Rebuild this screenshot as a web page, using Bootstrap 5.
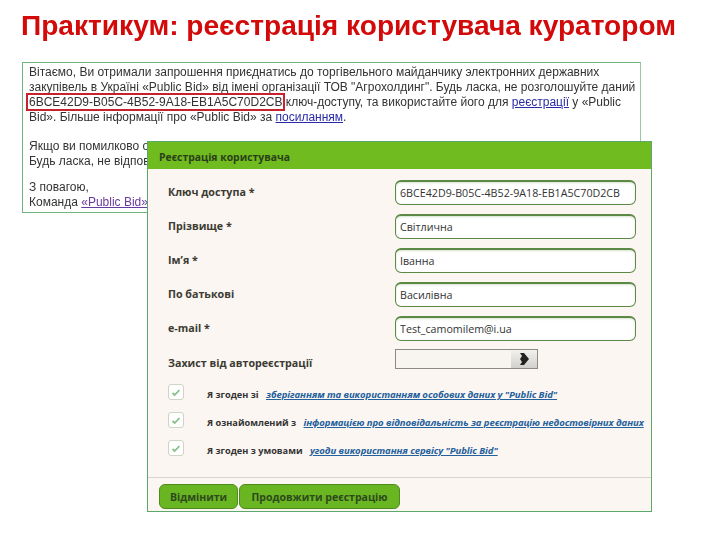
<!DOCTYPE html>
<html lang="uk">
<head>
<meta charset="utf-8">
<title>Практикум</title>
<link href="https://cdn.jsdelivr.net/npm/bootstrap@5.3.0/dist/css/bootstrap.min.css" rel="stylesheet">
<style>
html,body{margin:0;height:540px;overflow:hidden;background:#fff}
.stage{position:relative;width:720px;height:540px;padding:11px 0 0 21px;font-family:"Liberation Sans",Arial,sans-serif;filter:blur(.3px)}
.slide-title{font:700 28.1px/30px "Liberation Sans",Arial,sans-serif;color:#d20a0a;margin:0 0 21px;white-space:nowrap}
.mail{width:619px;height:151px;margin-left:1px;border:1px solid #6fb57c;border-right-color:#9cc9a5;padding:2px 0 0 6px;font-size:12px;line-height:15px;color:#333;white-space:nowrap}
.mail p{margin:0 0 14px}
.mail p+p{margin-bottom:11px}
.mail a{color:#2a2aa8}
.mail a.vis{color:#6a3a9e}
.keybox{border:2px solid #c8232c;padding:0 1px;margin-left:-3px;margin-right:-3px}
.reg{position:absolute;left:147px;top:141px;width:505px;height:371px;background:#fbf6f2;border:1px solid #5aa86a;font-family:"Open Sans","Noto Sans",sans-serif;display:flex;flex-direction:column}
.reg-head{height:27px;background:#70bb1f;font-size:10.4px;font-weight:700;color:#29401a;padding:5px 11px 0;display:flex;align-items:center;flex:none}
.reg-body{flex:1;padding:11px 15px 0 20px}
.frow{display:flex;align-items:center;height:25px;margin-bottom:9px}
.frow label{width:227px;font-size:10.7px;font-weight:700;color:#3b3b33;margin:0;flex:none}
.tinput{width:241px;height:25px;border:1px solid #5c8a45;border-top-width:2px;border-radius:6px;background:#fff;padding:0 4px;font-size:10.7px;color:#333;box-shadow:inset 0 1px 2px rgba(92,138,69,.25);font-family:inherit}
.captcha-row{height:20px;margin-bottom:15px;margin-top:-1px}
.captcha-row label{padding-top:8px}
.captcha{width:143px;height:20px;border:1px solid #8b8b84;background:#f8f4f0;display:flex;justify-content:flex-end}
.captcha span{width:26px;background:linear-gradient(#f3f1ee,#d2d0cd);display:flex;align-items:center;justify-content:center}
.crow{display:flex;align-items:flex-start;height:16px;margin-bottom:12px;font-size:9.2px;font-weight:700;color:#333;white-space:nowrap}
.crow .cap{padding-top:4px;line-height:13px}
.tick{width:16px;height:16px;border:1px solid #cfd5c6;border-radius:3px;background:#fff;flex:none;margin-right:23px;display:flex;align-items:center;justify-content:center}
.crow a{color:#24609c;font-style:italic;margin-left:5px;font-size:9.6px;letter-spacing:-.1px}
.reg-foot{height:34px;border-top:1px solid #d8d4cf;padding:6px 0 0 11px;display:flex;gap:1px;flex:none}
.gbtn{height:25px;background:#69b522;border:1px solid #4d8c1b;border-radius:6px;color:#2d4a1c;font:700 10.5px "Open Sans","Noto Sans",sans-serif;padding:0;display:flex;align-items:center;justify-content:center}
.b1{width:79px}.b2{width:161px}
</style>
</head>
<body>
<div class="stage">
  <h1 class="slide-title">Практикум: реєстрація користувача куратором</h1>
  <div class="mail">
    <p>Вітаємо, Ви отримали запрошення приєднатись до торгівельного майданчику электронних державних<br>закупівель в Україні «Public Bid» від імені організації ТОВ "Агрохолдинг". Будь ласка, не розголошуйте даний<br><span class="keybox">6BCE42D9-B05C-4B52-9A18-EB1A5C70D2CB</span> ключ-доступу, та використайте його для <a href="#">реєстрації</a> у «Public<br>Bid». Більше інформації про «Public Bid» за <a href="#">посиланням</a>.</p>
    <p>Якщо ви помилково о<br>Будь ласка, не відпов</p>
    <p>З повагою,<br>Команда <a class="vis" href="#">«Public Bid»</a></p>
  </div>
  <form class="reg">
    <div class="reg-head">Реєстрація користувача</div>
    <div class="reg-body">
      <div class="frow"><label>Ключ доступа *</label><input class="tinput" value="6BCE42D9-B05C-4B52-9A18-EB1A5C70D2CB"></div>
      <div class="frow"><label>Прізвище *</label><input class="tinput" value="Світлична"></div>
      <div class="frow"><label>Ім’я *</label><input class="tinput" value="Іванна"></div>
      <div class="frow"><label>По батькові</label><input class="tinput" value="Василівна"></div>
      <div class="frow"><label>e-mail *</label><input class="tinput" value="Test_camomilem@i.ua"></div>
      <div class="frow captcha-row"><label>Захист від автореєстрації</label>
        <div class="captcha"><span><svg width="14" height="14" viewBox="0 0 14 14"><path d="M3 1h4l5 6-5 6H3l2-3-2-3 2-3z" fill="#222"/></svg></span></div>
      </div>
      <div class="crow"><span class="tick"><svg width="10" height="9" viewBox="0 0 10 9"><path d="M1.5 5l2.2 2 4.8-5" fill="none" stroke="#86c08a" stroke-width="1.8"/></svg></span><span class="cap">Я згоден зі <a href="#">зберіганням та використанням особових даних у "Public Bid"</a></span></div>
      <div class="crow"><span class="tick"><svg width="10" height="9" viewBox="0 0 10 9"><path d="M1.5 5l2.2 2 4.8-5" fill="none" stroke="#86c08a" stroke-width="1.8"/></svg></span><span class="cap">Я ознайомлений з <a href="#">інформацією про відповідальність за реєстрацію недостовірних даних</a></span></div>
      <div class="crow"><span class="tick"><svg width="10" height="9" viewBox="0 0 10 9"><path d="M1.5 5l2.2 2 4.8-5" fill="none" stroke="#86c08a" stroke-width="1.8"/></svg></span><span class="cap">Я згоден з умовами <a href="#">угоди використання сервісу "Public Bid"</a></span></div>
    </div>
    <div class="reg-foot"><button type="button" class="gbtn b1">Відмінити</button><button type="button" class="gbtn b2">Продовжити реєстрацію</button></div>
  </form>
</div>
<script src="https://cdn.jsdelivr.net/npm/bootstrap@5.3.0/dist/js/bootstrap.bundle.min.js"></script>
</body>
</html>
